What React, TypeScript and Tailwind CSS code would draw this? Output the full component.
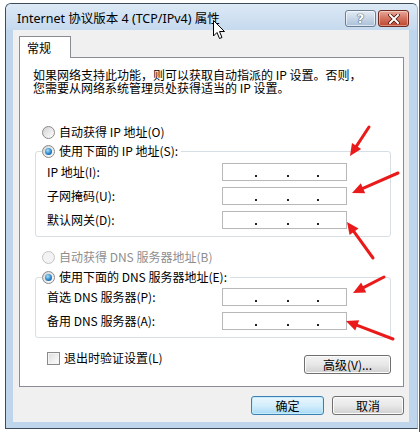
import React from "react";

const F = "font-['Noto_Sans_CJK_SC','Noto_Sans',sans-serif]";

function Radio({ checked = false, disabled = false }: { checked?: boolean; disabled?: boolean }) {
  return (
    <span
      className={
        "flex h-[13px] w-[13px] shrink-0 items-center justify-center rounded-full border " +
        (disabled
          ? "border-[#c4c4c4] bg-[#f3f3f3]"
          : "border-[#8a8a8a] bg-gradient-to-br from-[#d2d3d4] to-[#ffffff]")
      }
    >
      {checked && (
        <span className="h-[7px] w-[7px] rounded-full bg-[radial-gradient(circle_at_40%_35%,#a6e0fc_0%,#2d84c8_55%,#0c3c78_100%)]" />
      )}
    </span>
  );
}

function IpBox() {
  return (
    <div className="flex h-[18px] w-[125px] items-end border border-[#b8b8b8] bg-white pb-[3px] pl-[32px]">
      <span className="h-[2px] w-[2px] bg-[#222]" />
      <span className="ml-[30px] h-[2px] w-[2px] bg-[#222]" />
      <span className="ml-[28px] h-[2px] w-[2px] bg-[#222]" />
    </div>
  );
}

function Arrow({ x1, y1, x2, y2 }: { x1: number; y1: number; x2: number; y2: number }) {
  const dx = x2 - x1;
  const dy = y2 - y1;
  const len = Math.sqrt(dx * dx + dy * dy);
  const ux = dx / len;
  const uy = dy / len;
  const hl = 12;
  const hw = 5.5;
  const bx = x2 - ux * hl;
  const by = y2 - uy * hl;
  const px = -uy;
  const py = ux;
  const pts = `${x2},${y2} ${bx + px * hw},${by + py * hw} ${bx - px * hw},${by - py * hw}`;
  return (
    <g>
      <line x1={x1} y1={y1} x2={bx + ux * 2} y2={by + uy * 2} stroke="#ea1a1a" strokeWidth={3} strokeLinecap="round" />
      <polygon points={pts} fill="#ea1a1a" />
    </g>
  );
}

export default function App() {
  return (
    <div className={"relative h-[432px] w-[420px] overflow-hidden bg-white text-[12px] text-black " + F}>
      <div className="flex">
        <div className="ml-[5px] mt-[3px] flex h-[426px] w-[413px] flex-col rounded-t-[6px] border border-[#3d4b5a] border-r-[#9fb6cf] bg-[#bfd5ec]">
          {/* title bar */}
          <div className="flex h-[26px] shrink-0 rounded-t-[5px] bg-gradient-to-b from-[#dce9f6] to-[#c6d9ee] pl-[11px] pr-[8px]">
            <div className="flex-1 pt-[7px] font-['Noto_Sans','Noto_Sans_CJK_SC',sans-serif] text-[12.5px] leading-[16px] text-black">
              Internet 协议版本 4 (TCP/IPv4) 属性
            </div>
            <div className="mt-[6px] flex gap-[2px]">
              <div className="flex h-[17px] w-[31px] items-center justify-center rounded-[3px] border border-[#6b7d91] bg-gradient-to-b from-[#e3ecf6] via-[#c7d6e7] to-[#a9bfd8] shadow-[inset_0_0_0_1px_rgba(255,255,255,0.6)]">
                <span className="font-['DejaVu_Sans',sans-serif] text-[13px] font-bold leading-none text-white [text-shadow:0_0_1px_#253545,0_0_1px_#253545]">?</span>
              </div>
              <div className="flex h-[17px] w-[31px] items-center justify-center rounded-[3px] border border-[#6e2a1f] bg-gradient-to-b from-[#e8a899] via-[#d2725f] to-[#c0432d] shadow-[inset_0_0_0_1px_rgba(255,255,255,0.4)]">
                <svg width="12" height="10" viewBox="0 0 12 10">
                  <path d="M2 1 L10 9 M10 1 L2 9" stroke="#4a120a" strokeWidth="3.6" strokeLinecap="square" />
                  <path d="M2 1 L10 9 M10 1 L2 9" stroke="#ffffff" strokeWidth="2" strokeLinecap="square" />
                </svg>
              </div>
            </div>
          </div>
          {/* body */}
          <div className="flex flex-1 pb-[6px] pl-[7px] pr-[7px]">
            <div className="flex w-[396px] flex-col bg-[#f0f0f0] pl-[6px] pr-[5px] pt-[6px]">
              {/* tab */}
              <div className="flex">
                <div className="relative z-10 -mb-px h-[22px] w-[52px] border border-b-0 border-[#898c95] bg-white pl-[7px] pt-[3px] leading-[16px]">
                  常规
                </div>
              </div>
              {/* panel */}
              <div className="border border-[#898c95] bg-white pb-[12px] pl-[13px] pr-[12px] pt-[10px]">
                <p className="leading-[13px]">
                  如果网络支持此功能，则可以获取自动指派的 IP 设置。否则，
                  <br />
                  您需要从网络系统管理员处获得适当的 IP 设置。
                </p>
                <div className="ml-[9px] mt-[31px] flex h-[14px] items-center gap-[4px] leading-[14px]">
                  <Radio />
                  <span>自动获得 IP 地址(O)</span>
                </div>
                <fieldset className="ml-[2px] mt-[5px] w-[356px] rounded-[3px] border border-[#d5dfe5] px-[6px] pb-[7px]">
                  <legend className="pr-[3px]">
                    <div className="flex h-[14px] items-center gap-[4px] leading-[14px]">
                      <Radio checked />
                      <span>使用下面的 IP 地址(S):</span>
                    </div>
                  </legend>
                  <div className="grid grid-cols-[175px_125px] items-center gap-y-[6px] pl-[5px] pt-[5px]">
                    <span>IP 地址(I):</span>
                    <IpBox />
                    <span>子网掩码(U):</span>
                    <IpBox />
                    <span>默认网关(D):</span>
                    <IpBox />
                  </div>
                </fieldset>
                <div className="ml-[9px] mt-[13px] flex h-[14px] items-center gap-[4px] leading-[14px] text-[#8e8e8e]">
                  <Radio disabled />
                  <span>自动获得 DNS 服务器地址(B)</span>
                </div>
                <fieldset className="ml-[2px] mt-[6px] w-[356px] rounded-[3px] border border-[#d5dfe5] px-[6px] pb-[7px]">
                  <legend className="pr-[3px]">
                    <div className="flex h-[14px] items-center gap-[4px] leading-[14px]">
                      <Radio checked />
                      <span>使用下面的 DNS 服务器地址(E):</span>
                    </div>
                  </legend>
                  <div className="grid grid-cols-[175px_125px] items-center gap-y-[6px] pl-[5px] pt-[4px]">
                    <span>首选 DNS 服务器(P):</span>
                    <IpBox />
                    <span>备用 DNS 服务器(A):</span>
                    <IpBox />
                  </div>
                </fieldset>
                <div className="ml-[14px] mt-[13px] flex w-[344px] items-start justify-between">
                  <div className="flex h-[14px] items-center gap-[4px] leading-[14px]">
                    <span className="h-[13px] w-[13px] border border-[#8a8a8a] bg-gradient-to-br from-[#dcdcdc] to-[#ffffff] shadow-[inset_0_0_0_1px_#f4f4f4]" />
                    <span>退出时验证设置(L)</span>
                  </div>
                  <div className="mt-[4px] flex h-[19px] w-[87px] items-center justify-center rounded-[3px] border border-[#707070] bg-gradient-to-b from-[#f3f3f3] via-[#e8e8e8] to-[#d0d0d0] leading-[14px] shadow-[inset_0_0_0_1px_#fbfbfb]">
                    高级(V)...
                  </div>
                </div>
              </div>
              {/* dialog buttons */}
              <div className="mt-[9px] flex justify-end gap-[8px]">
                <div className="flex h-[19px] w-[73px] items-center justify-center rounded-[3px] border border-[#3c7fb1] bg-gradient-to-b from-[#eaf6fd] via-[#d4eefc] to-[#a9daf5] leading-[14px] shadow-[inset_0_0_0_1px_#c5ecfc]">
                  确定
                </div>
                <div className="flex h-[19px] w-[72px] items-center justify-center rounded-[3px] border border-[#707070] bg-gradient-to-b from-[#f3f3f3] via-[#e8e8e8] to-[#d0d0d0] leading-[14px] shadow-[inset_0_0_0_1px_#fbfbfb]">
                  取消
                </div>
              </div>
            </div>
          </div>
        </div>
        <div className="ml-[1px] h-[432px] w-px bg-[#555]" />
      </div>

      {/* annotations */}
      <svg className="pointer-events-none absolute left-0 top-0" width="420" height="432" viewBox="0 0 420 432">
        <Arrow x1={369} y1={127} x2={350} y2={156} />
        <Arrow x1={398} y1={173} x2={352} y2={193} />
        <Arrow x1={373} y1={258} x2={347} y2={222} />
        <Arrow x1={384} y1={277} x2={353} y2={293} />
        <Arrow x1={393} y1={339} x2={346} y2={321} />
        <path
          d="M213.5 20.5 L213.5 36 L217 32.5 L219.5 38.5 L222 37.5 L219.5 31.5 L224.5 31.5 Z"
          fill="#ffffff"
          stroke="#000000"
          strokeWidth="1"
          strokeLinejoin="round"
        />
      </svg>
    </div>
  );
}
